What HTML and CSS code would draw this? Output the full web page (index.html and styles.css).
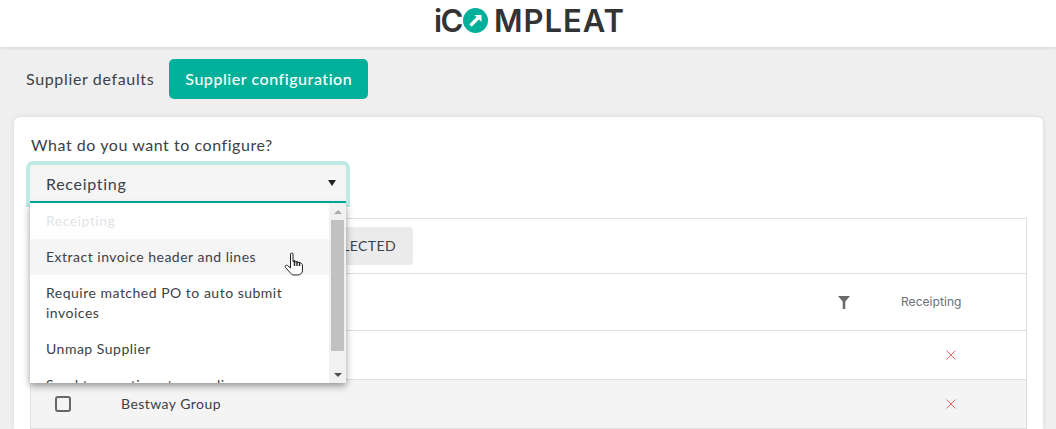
FILE: index.html

```html
<!DOCTYPE html>
<html lang="en">
<head>
    <meta charset="UTF-8">
    <title>Supplier configuration</title>
    <link rel="stylesheet" href="styles.css">
</head>
<body>
    <header class="top-bar">
        <div class="logo">
            <span class="logo-i">iC</span>
            <svg class="logo-mark" width="25" height="25" viewBox="0 0 25 25">
                <circle cx="12.5" cy="12.5" r="12.5" fill="#00b09b"/>
                <path d="M7.5 17.5 L15 10" stroke="#fff" stroke-width="3.2" fill="none"/>
                <path d="M11.5 7 H18.5 V14 Z" fill="#fff"/>
            </svg>
            <span class="logo-rest">MPLEAT</span>
        </div>
    </header>

    <nav class="tabs">
        <a class="tab">Supplier defaults</a>
        <a class="tab tab-active">Supplier configuration</a>
    </nav>

    <main class="card">
        <label class="field-label">What do you want to configure?</label>
        <div class="select-wrap">
            <div class="select">
                <span>Receipting</span>
                <span class="select-arrow"></span>
            </div>
            <div class="menu">
                <ul class="menu-list">
                    <li class="menu-item menu-item-disabled">Receipting</li>
                    <li class="menu-item menu-item-hover">
                        Extract invoice header and lines
                        <svg class="hand" width="20" height="24" viewBox="0 0 20 24">
                            <path d="M6.5 2 C6.5 .8 9 .8 9 2 V9.5 L15.5 10.5 C17.5 11 18.5 12 18.5 14 V18 C18.5 21 16.5 23 13.5 23 H10 C8 23 7 22 6 20.5 L1.5 15.5 C.5 14 2 12.5 3.5 13.5 L6.5 16 Z" fill="#fff" stroke="#222" stroke-width="1"/>
                            <path d="M10.5 8 V14 M13 9 V14 M15.5 10 V14" stroke="#222" stroke-width="1.4" fill="none"/>
                        </svg>
                    </li>
                    <li class="menu-item">Require matched PO to auto submit invoices</li>
                    <li class="menu-item">Unmap Supplier</li>
                    <li class="menu-item">Send transactions to supplier</li>
                </ul>
                <div class="scrollbar">
                    <span class="scroll-btn"><span class="scroll-up"></span></span>
                    <span class="scroll-thumb"></span>
                    <span class="scroll-btn"><span class="scroll-down"></span></span>
                </div>
            </div>
        </div>

        <section class="grid">
            <div class="toolbar">
                <button class="toolbar-btn">CLEAR SELECTED</button>
            </div>
            <div class="row row-head">
                <div class="col-check"></div>
                <div class="col-name col-filter">
                    <svg class="funnel" width="12" height="13" viewBox="0 0 12 13">
                        <path d="M0 0 H12 L7.3 5.5 V13 H4.7 V5.5 Z" fill="#6b6b6b"/>
                    </svg>
                </div>
                <div class="col-value">Receipting</div>
            </div>
            <div class="row">
                <div class="col-check"><span class="checkbox"></span></div>
                <div class="col-name"></div>
                <div class="col-mark"><svg width="10" height="10" viewBox="0 0 10 10"><path d="M.5 .5 L9.5 9.5 M9.5 .5 L.5 9.5" stroke="#e8685f" stroke-width="1" fill="none"/></svg></div>
            </div>
            <div class="row row-alt">
                <div class="col-check"><span class="checkbox"></span></div>
                <div class="col-name">Bestway Group</div>
                <div class="col-mark"><svg width="10" height="10" viewBox="0 0 10 10"><path d="M.5 .5 L9.5 9.5 M9.5 .5 L.5 9.5" stroke="#e8685f" stroke-width="1" fill="none"/></svg></div>
            </div>
        </section>
    </main>
</body>
</html>
```

FILE: styles.css

```css
html, body {
    height: 100%;
    overflow: hidden;
}

body {
    margin: 0;
    display: flex;
    flex-direction: column;
    background-color: #efefef;
    font-family: Lato, "Noto Sans", sans-serif;
    color: #3b4147;
}

.top-bar {
    height: 47px;
    flex: none;
    background: #fff;
    box-shadow: 0 1px 4px rgba(0, 0, 0, 0.12);
    display: flex;
    justify-content: center;
    padding-left: 3px;
}

.logo {
    display: flex;
    align-items: center;
    gap: 1px;
    height: 40px;
    font-family: Inter, sans-serif;
    font-weight: 600;
    font-size: 31px;
    color: #333;
}

.logo-i {
    letter-spacing: -1.5px;
}

.logo-rest {
    margin-left: 5px;
    letter-spacing: 1px;
}

.tabs {
    flex: none;
    display: flex;
    align-items: center;
    gap: 15px;
    padding: 12px 26px 18px;
    font-size: 16px;
    letter-spacing: 0.65px;
}

.tab {
    line-height: 40px;
}

.tab-active {
    background-color: #00b09b;
    color: #fff;
    padding: 0 16px;
    border-radius: 5px;
    font-weight: 500;
    letter-spacing: 0.55px;
}

.card {
    flex: 1;
    background: #fff;
    margin: 0 13px 0 14px;
    padding: 16px 16px 0;
    border-radius: 6px 6px 0 0;
    box-shadow: 0 0 5px rgba(0, 0, 0, 0.1);
}

.field-label {
    display: block;
    margin: 0 0 8px 1px;
    font-size: 16px;
    line-height: 24px;
    letter-spacing: 0.55px;
}

.select-wrap {
    position: relative;
    width: 316px;
}

.select {
    height: 36px;
    padding: 0 10px 0 16px;
    display: flex;
    align-items: center;
    justify-content: space-between;
    background-color: #f5f5f5;
    border-bottom: 2px solid #00b09b;
    border-radius: 3px 3px 0 0;
    box-shadow: 0 0 0 4px rgba(0, 176, 155, 0.25);
    font-size: 16px;
    letter-spacing: 0.7px;
}

.select-arrow {
    width: 0;
    height: 0;
    border-left: 4.5px solid transparent;
    border-right: 4.5px solid transparent;
    border-top: 6px solid #222;
}

.menu {
    position: absolute;
    top: 100%;
    left: 0;
    right: 0;
    height: 180px;
    display: flex;
    background: #fff;
    box-shadow: 0 3px 7px rgba(0, 0, 0, 0.4);
    overflow: hidden;
    z-index: 5;
}

.menu-list {
    flex: 1;
    margin: 0;
    padding: 0;
    list-style: none;
}

.menu-item {
    position: relative;
    padding: 8px 40px 8px 16px;
    font-size: 14px;
    line-height: 20px;
    letter-spacing: 0.5px;
}

.menu-item-disabled {
    color: #dfe3e8;
}

.menu-item-hover {
    background-color: #f5f5f5;
}

.hand {
    position: absolute;
    left: 254px;
    top: 13px;
}

.scrollbar {
    width: 17px;
    background-color: #f1f1f1;
    display: flex;
    flex-direction: column;
    align-items: center;
}

.scroll-btn {
    height: 17px;
    width: 17px;
    flex: none;
    display: flex;
    align-items: center;
    justify-content: center;
}

.scroll-thumb {
    width: 13px;
    height: 131px;
    flex: none;
    margin-bottom: auto;
    background-color: #c1c1c1;
}

.scroll-up {
    border-left: 4px solid transparent;
    border-right: 4px solid transparent;
    border-bottom: 4px solid #a8a8a8;
}

.scroll-down {
    border-left: 4px solid transparent;
    border-right: 4px solid transparent;
    border-top: 4px solid #505050;
}

.grid {
    margin-top: 15px;
    width: 997px;
    box-sizing: border-box;
    border: 1px solid #e0e0e0;
    border-bottom: 0;
}

.toolbar {
    height: 54px;
    padding-left: 229px;
    display: flex;
    align-items: center;
    border-bottom: 1px solid #e0e0e0;
}

.toolbar-btn {
    width: 153px;
    height: 38px;
    padding: 0 17px 2px 0;
    border: none;
    border-radius: 4px;
    background-color: #ebebeb;
    color: #3b4147;
    font-family: inherit;
    font-size: 14px;
    letter-spacing: 0.4px;
    text-align: right;
}

.row {
    height: 48px;
    display: flex;
    align-items: center;
    border-bottom: 1px solid #e0e0e0;
    font-size: 14px;
    letter-spacing: 0.45px;
}

.row-head {
    height: 56px;
}

.row-alt {
    background-color: #f4f4f4;
}

.col-check {
    width: 65px;
    padding-right: 2px;
    box-sizing: border-box;
    display: flex;
    justify-content: center;
}

.col-name {
    flex: 1;
    padding: 0 26px 2px 25px;
    display: flex;
    align-items: center;
}

.col-filter {
    justify-content: flex-end;
    padding-bottom: 0;
}

.col-value {
    width: 125px;
    padding: 0 0 2px 25px;
    font-family: Inter, sans-serif;
    font-size: 12px;
    letter-spacing: 0.05px;
    color: #6b7075;
}

.col-mark {
    width: 150px;
    display: flex;
    justify-content: center;
}

.checkbox {
    width: 12px;
    height: 12px;
    border: 2px solid #666;
    border-radius: 3px;
}
```
